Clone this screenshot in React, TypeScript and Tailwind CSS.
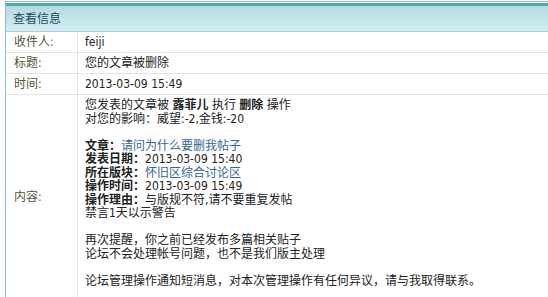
import React from "react";

const font = {
  fontFamily: '"DejaVu Sans Condensed", "Noto Sans CJK SC", sans-serif',
};

function Row({ label, children }: { label: string; children: React.ReactNode }) {
  return (
    <div className="flex h-[21px] border-b border-[#d9e5e7]">
      <div className="w-[72px] shrink-0 border-r border-[#d9e5e7] pl-[8px] flex items-center text-[#55553a]">
        {label}
      </div>
      <div className="pl-[7px] flex items-center text-[#222]">{children}</div>
    </div>
  );
}

export default function App() {
  return (
    <div className="bg-white w-[548px] h-[297px] overflow-hidden text-[12px]" style={font}>
      <div className="pt-[1px] pl-[5px] w-[700px]">
        <div className="border-l border-t border-[#8fbcc1]">
          <div className="h-[1px] bg-white" />
          <div className="h-[3px] bg-[#4eabb3]" />
          <div className="h-[26px] bg-gradient-to-b from-[#b3dbe0] to-[#d3edf1] border-b border-[#a8d2d8] pl-[7px] flex items-center text-[#1d4f60]">
            查看信息
          </div>
          <Row label="收件人:">feiji</Row>
          <Row label="标题:">您的文章被删除</Row>
          <Row label="时间:">2013-03-09 15:49</Row>
          <div className="flex">
            <div className="w-[72px] shrink-0 border-r border-[#d9e5e7] pl-[8px] flex items-center text-[#55553a]">
              内容:
            </div>
            <div className="pl-[7px] pt-[4px] pb-[10px] leading-[13.5px] text-[#222]">
              <div>
                您发表的文章被 <b>露菲儿</b> 执行 <b>删除</b> 操作
              </div>
              <div>对您的影响：威望:-2,金钱:-20</div>
              <div>&nbsp;</div>
              <div>
                <b>文章：</b>
                <span className="text-[#336699]">请问为什么要删我帖子</span>
              </div>
              <div>
                <b>发表日期：</b>2013-03-09 15:40
              </div>
              <div>
                <b>所在版块：</b>
                <span className="text-[#336699]">怀旧区综合讨论区</span>
              </div>
              <div>
                <b>操作时间：</b>2013-03-09 15:49
              </div>
              <div>
                <b>操作理由：</b>与版规不符,请不要重复发帖
              </div>
              <div>禁言1天以示警告</div>
              <div>&nbsp;</div>
              <div>再次提醒，你之前已经发布多篇相关贴子</div>
              <div>论坛不会处理帐号问题，也不是我们版主处理</div>
              <div>&nbsp;</div>
              <div>论坛管理操作通知短消息，对本次管理操作有任何异议，请与我取得联系。</div>
            </div>
          </div>
        </div>
      </div>
    </div>
  );
}
